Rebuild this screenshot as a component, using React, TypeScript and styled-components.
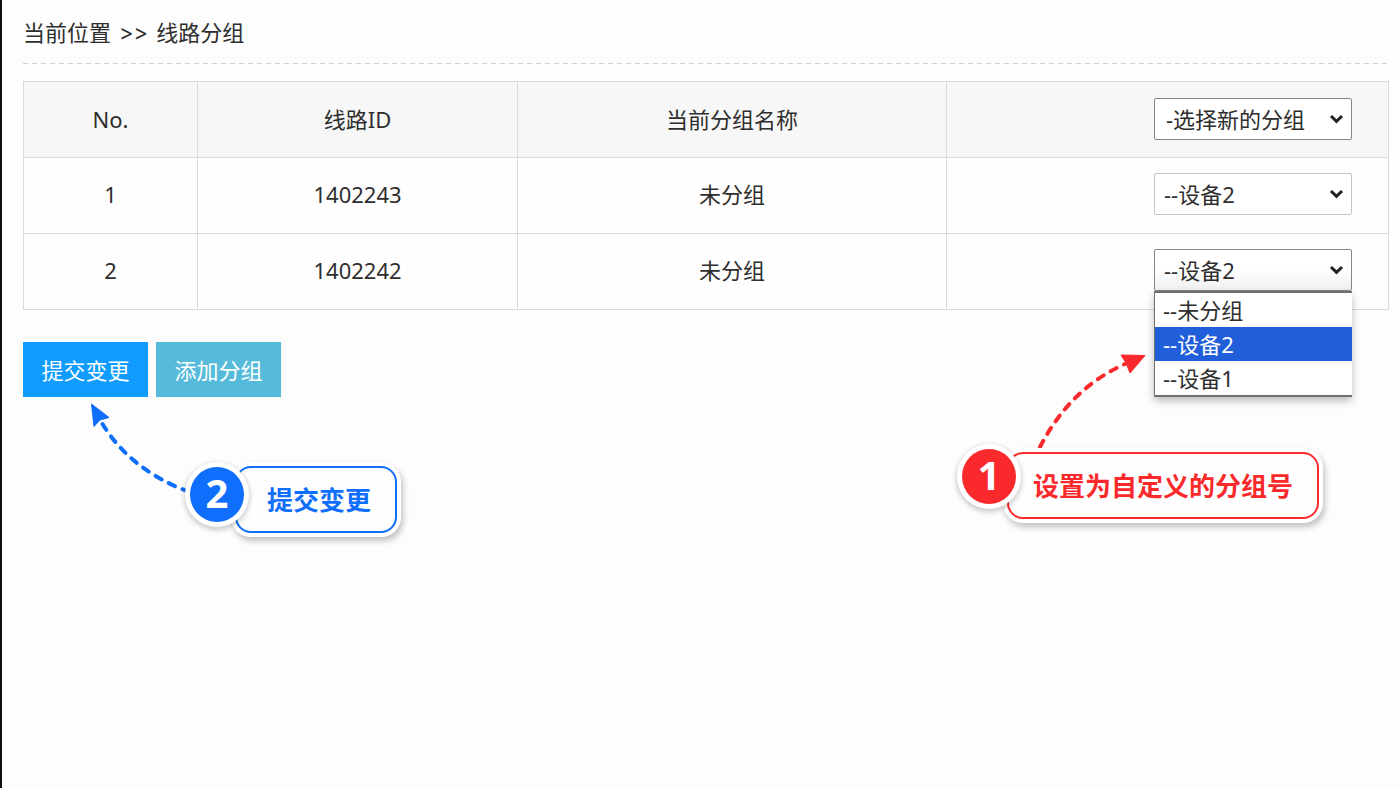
import React, { useState } from 'react';
import styled, { createGlobalStyle, css } from 'styled-components';

const RED = '#fa2a2c';
const BLUE = '#0f6efb';

const GlobalStyle = createGlobalStyle`
  *, *::before, *::after { box-sizing: border-box; }
  body {
    margin: 0;
    background: #fdfdfd;
    color: #2e2e2e;
    font: 22px/30px "Noto Sans", "Noto Sans CJK SC", sans-serif;
  }
`;

const Page = styled.main`
  min-height: 100vh;
  padding: 17px 11px 0 21px;
  border-left: 2px solid #101010;
`;

const Breadcrumb = styled.nav`
  display: flex;
  gap: 8px;
  padding-bottom: 16px;
`;

const Separator = styled.span`
  font-family: Inter, sans-serif;
  font-variant-ligatures: none;
  font-feature-settings: "calt" 0;
`;

const Divider = styled.div`
  height: 1px;
  margin-bottom: 17px;
  background: repeating-linear-gradient(90deg, #d2d2d2 0 5px, transparent 5px 9px);
`;

const LineTable = styled.table`
  width: 100%;
  table-layout: fixed;
  border-collapse: collapse;
  text-align: center;
`;

const Column = styled.col<{ $share: number }>`
  width: ${(p) => p.$share}%;
`;

const cell = css`
  height: 76px;
  border: 1px solid #dadada;
  font-weight: 400;
`;

const HeadCell = styled.th`
  ${cell}
  padding: 0 0 2px;
  background: #f7f7f7;
`;

const Cell = styled.td`
  ${cell}
  padding: 0 0 4px;
  background: #fefefe;
`;

const SelectSlot = styled.div`
  display: flex;
  justify-content: flex-end;
  padding-right: 36px;
`;

const SelectBox = styled.div`
  position: relative;
  width: 198px;
  text-align: left;
`;

const Select = styled.select<{ $strong?: boolean; $open?: boolean; $indent?: boolean }>`
  appearance: none;
  display: block;
  width: 100%;
  height: 42px;
  padding: 0 32px 0 ${(p) => (p.$indent ? 11 : 9)}px;
  border: 1px solid ${(p) => (p.$strong ? '#858585' : '#c4c4c4')};
  border-radius: 2px;
  background: ${(p) => (p.$open ? 'linear-gradient(#fff 45%, #f0f0f0)' : '#fff')};
  color: inherit;
  font: inherit;
`;

const Chevron = styled.svg`
  position: absolute;
  top: 16px;
  right: 8px;
  width: 15px;
  height: 10px;
  pointer-events: none;
`;

const Menu = styled.ul`
  position: absolute;
  z-index: 2;
  top: 100%;
  left: 0;
  width: 100%;
  margin: 0;
  padding: 0;
  border: solid #707070;
  border-width: 2px 0 2px 1px;
  background: #fff;
  box-shadow: 0 4px 8px rgba(0, 0, 0, 0.26);
  list-style: none;
`;

const MenuItem = styled.li<{ $selected: boolean }>`
  padding: 0 8px;
  font-size: 22px;
  line-height: 34px;
  cursor: default;
  ${(p) => p.$selected && css`
    background: #205fd9;
    color: #fff;
  `}
`;

const Actions = styled.div`
  position: relative;
  display: flex;
  gap: 8px;
  margin-top: 32px;
`;

const ActionButton = styled.button<{ $color: string }>`
  min-width: 125px;
  height: 55px;
  padding: 0 16px;
  border: 0;
  background: ${(p) => p.$color};
  color: #fff;
  font: inherit;
  cursor: pointer;
`;

const Callout = styled.div<{ $left: number; $top: number; $color: string }>`
  position: absolute;
  z-index: 3;
  left: ${(p) => p.$left}px;
  top: ${(p) => p.$top}px;
  display: flex;
  align-items: flex-start;
  color: ${(p) => p.$color};
  font-weight: 700;
  white-space: nowrap;
`;

const Badge = styled.span`
  position: relative;
  z-index: 1;
  display: flex;
  justify-content: center;
  width: 54px;
  height: 55px;
  border-radius: 50%;
  background: currentColor;
  box-shadow: 0 0 0 5px #fff, 0 2px 5px 6px rgba(0, 0, 0, 0.2);
`;

const BadgeNumber = styled.span`
  color: #fff;
  font-size: 40px;
  line-height: 52px;
`;

const CalloutLabel = styled.span<{ $drop: number; $indent: number }>`
  margin: ${(p) => p.$drop}px 0 0 -9px;
  padding: 2px 24px 0 ${(p) => p.$indent}px;
  border: 2px solid currentColor;
  border-radius: 16px;
  background: #fefefe;
  box-shadow: 0 0 0 4px #fff, 2px 4px 6px 4px rgba(0, 0, 0, 0.24);
  font-size: 26px;
  line-height: 61px;
`;

const Arrow = styled.svg<{ $left: number; $top: number }>`
  position: absolute;
  z-index: 2;
  left: ${(p) => p.$left}px;
  top: ${(p) => p.$top}px;
  overflow: visible;
  pointer-events: none;
`;

type PickerProps = {
  label: string;
  options: string[];
  value: string;
  onChange: (value: string) => void;
  strong?: boolean;
  indent?: boolean;
  open?: boolean;
  children?: React.ReactNode;
};

function GroupPicker({ label, options, value, onChange, strong, indent, open, children }: PickerProps) {
  return (
    <SelectSlot>
      <SelectBox>
        <Select
          aria-label={label}
          value={value}
          onChange={(e) => onChange(e.target.value)}
          $strong={strong}
          $indent={indent}
          $open={open}
        >
          {options.map((o) => (
            <option key={o}>{o}</option>
          ))}
        </Select>
        <Chevron viewBox="0 0 15 10" fill="none" stroke="#222" strokeWidth="3" aria-hidden="true">
          <path d="M2 2l5.500 5.300L13 2" />
        </Chevron>
        {open && (
          <Menu role="listbox" aria-label={label}>
            {options.map((o) => (
              <MenuItem
                key={o}
                role="option"
                aria-selected={o === value}
                $selected={o === value}
                onClick={() => onChange(o)}
              >
                {o}
              </MenuItem>
            ))}
          </Menu>
        )}
        {children}
      </SelectBox>
    </SelectSlot>
  );
}

const GROUPS = ['--未分组', '--设备2', '--设备1'];

export default function App() {
  const [all, setAll] = useState('-选择新的分组');
  const [first, setFirst] = useState('--设备2');
  const [second, setSecond] = useState('--设备2');

  return (
    <>
      <GlobalStyle />
      <Page>
        <Breadcrumb aria-label="当前位置">
          <span>当前位置</span>
          <Separator>&gt;&gt;</Separator>
          <span>线路分组</span>
        </Breadcrumb>
        <Divider />

        <LineTable>
          <colgroup>
            <Column $share={12.75} />
            <Column $share={23.45} />
            <Column $share={31.4} />
            <Column $share={32.4} />
          </colgroup>
          <thead>
            <tr>
              <HeadCell>No.</HeadCell>
              <HeadCell>线路ID</HeadCell>
              <HeadCell>当前分组名称</HeadCell>
              <HeadCell>
                <GroupPicker
                  label="选择新的分组"
                  options={['-选择新的分组', ...GROUPS]}
                  value={all}
                  onChange={setAll}
                  strong
                  indent
                />
              </HeadCell>
            </tr>
          </thead>
          <tbody>
            <tr>
              <Cell>1</Cell>
              <Cell>1402243</Cell>
              <Cell>未分组</Cell>
              <Cell>
                <GroupPicker label="1402243" options={GROUPS} value={first} onChange={setFirst} />
              </Cell>
            </tr>
            <tr>
              <Cell>2</Cell>
              <Cell>1402242</Cell>
              <Cell>未分组</Cell>
              <Cell>
                <GroupPicker label="1402242" options={GROUPS} value={second} onChange={setSecond} strong open>
                  <Arrow $left={-120} $top={100} width="120" height="100" viewBox="0 0 120 100" aria-hidden="true">
                    <path
                      d="M6 98Q36 39.500 91 15"
                      fill="none"
                      stroke={RED}
                      strokeWidth="4"
                      strokeLinecap="round"
                      strokeDasharray="7 8"
                    />
                    <path d="M111 6.500L87 6L92 14L96 24Z" fill={RED} stroke={RED} strokeLinejoin="round" />
                  </Arrow>
                  <Callout $left={-192} $top={200} $color={RED}>
                    <Badge>
                      <BadgeNumber>1</BadgeNumber>
                    </Badge>
                    <CalloutLabel $drop={3} $indent={24}>设置为自定义的分组号</CalloutLabel>
                  </Callout>
                </GroupPicker>
              </Cell>
            </tr>
          </tbody>
        </LineTable>

        <Actions>
          <ActionButton type="submit" $color="#109cff">提交变更</ActionButton>
          <ActionButton type="button" $color="#56bbdb">添加分组</ActionButton>
          <Arrow $left={67} $top={61} width="100" height="90" viewBox="0 0 100 90" aria-hidden="true">
            <path
              d="M12.500 21Q41 67 97 88"
              fill="none"
              stroke={BLUE}
              strokeWidth="4"
              strokeLinecap="round"
              strokeDasharray="7 8"
            />
            <path d="M1.500 1L19 14.500L10 17L4 23.500Z" fill={BLUE} stroke={BLUE} strokeLinejoin="round" />
          </Arrow>
          <Callout $left={167} $top={125} $color={BLUE}>
            <Badge>
              <BadgeNumber>2</BadgeNumber>
            </Badge>
            <CalloutLabel $drop={-1} $indent={30}>提交变更</CalloutLabel>
          </Callout>
        </Actions>
      </Page>
    </>
  );
}
